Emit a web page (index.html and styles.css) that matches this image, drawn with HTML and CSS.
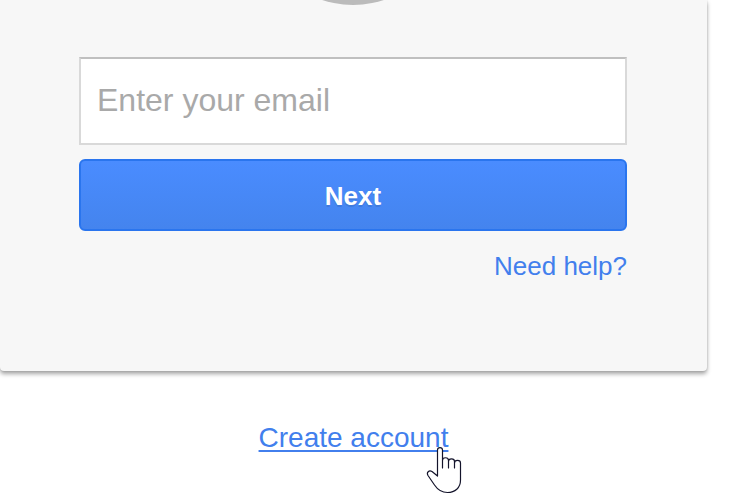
FILE: index.html
```html
<!DOCTYPE html>
<html lang="en">
<head>
    <meta charset="UTF-8">
    <meta name="viewport" content="width=device-width, initial-scale=1.0">
    <title>Sign in</title>
    <link rel="stylesheet" href="styles.css">
</head>
<body>
    <main class="card">
        <div class="avatar-wrap">
            <div class="avatar"></div>
        </div>
        <form class="signin">
            <input class="email" type="email" name="email" placeholder="Enter your email" aria-label="Enter your email">
            <button class="next" type="submit">Next</button>
            <a class="help" href="#help">Need help?</a>
        </form>
    </main>

    <div class="footer">
        <div class="create">
            <a class="create-link" href="#signup">Create account</a>
            <!-- hand pointer -->
            <svg class="pointer" width="36" height="48" viewBox="0 0 36 48" aria-hidden="true">
                <path d="M11.500 30V4C11.500 .8 16.500 .8 16.500 4V22V14.500C16.500 10.800 22.500 10.800 22.500 14.500V22V15.500C22.500 12 28.500 12 28.500 15.500V22V17C28.500 13.500 34.500 13.500 34.500 17V34C34.500 42 29 46.500 21.500 46.500C15.500 46.500 11.500 43.500 8.500 39L2 29.500C.2 26.500 3 23.800 6 25.500Z" fill="#fff" stroke="#14142b" stroke-width="1.2" stroke-linejoin="round"/>
            </svg>
        </div>
    </div>
</body>
</html>
```
FILE: styles.css
```css
body {
    margin: 0;
    min-height: 100vh;
    background: #fff;
    font-family: "Liberation Sans", Arial, sans-serif;
}

a {
    color: #427fed;
    text-decoration: none;
}

.card {
    box-sizing: border-box;
    margin-right: 22px;
    padding: 0 80px 89px 79px;
    background: #f7f7f7;
    border-radius: 0 0 4px 4px;
    box-shadow: 0 3px 4px rgba(0, 0, 0, 0.35), 0 0 2px rgba(0, 0, 0, 0.15);
}

.avatar-wrap {
    display: flex;
    justify-content: center;
    align-items: flex-end;
    height: 5px;
    margin-bottom: 52px;
    overflow: hidden;
}

.avatar {
    flex: none;
    width: 196px;
    height: 196px;
    border-radius: 50%;
    background: #bbb;
}

.signin {
    display: flex;
    flex-direction: column;
}

.email {
    box-sizing: border-box;
    width: 100%;
    height: 88px;
    margin: 0 0 14px;
    padding: 0 16px 2px;
    border: 2px solid #d9d9d9;
    border-top-color: #c0c0c0;
    background: #fff;
    font: 32px "Liberation Sans", Arial, sans-serif;
}

.email::placeholder {
    color: #a9a9a9;
}

.next {
    height: 72px;
    margin: 0 0 19px;
    padding: 2px 0 0;
    border: 2px solid #2a75ee;
    border-radius: 6px;
    background: #4787f5 linear-gradient(#4a8cff, #4484ee);
    color: #fff;
    font: bold 26px "Liberation Sans", Arial, sans-serif;
    text-shadow: 0 2px rgba(0, 0, 0, 0.1);
    cursor: pointer;
}

.help {
    align-self: flex-end;
    font-size: 26px;
    line-height: 32px;
}

.footer {
    display: flex;
    justify-content: center;
    margin: 50px 22px 0 0;
    padding-bottom: 40px;
}

.create {
    position: relative;
}

.create-link {
    font-size: 28px;
    line-height: 34px;
    text-decoration: underline;
    text-decoration-thickness: 2px;
    text-decoration-skip-ink: none;
    text-underline-offset: 3px;
}

.pointer {
    position: absolute;
    top: 25px;
    right: -14px;
}
```
